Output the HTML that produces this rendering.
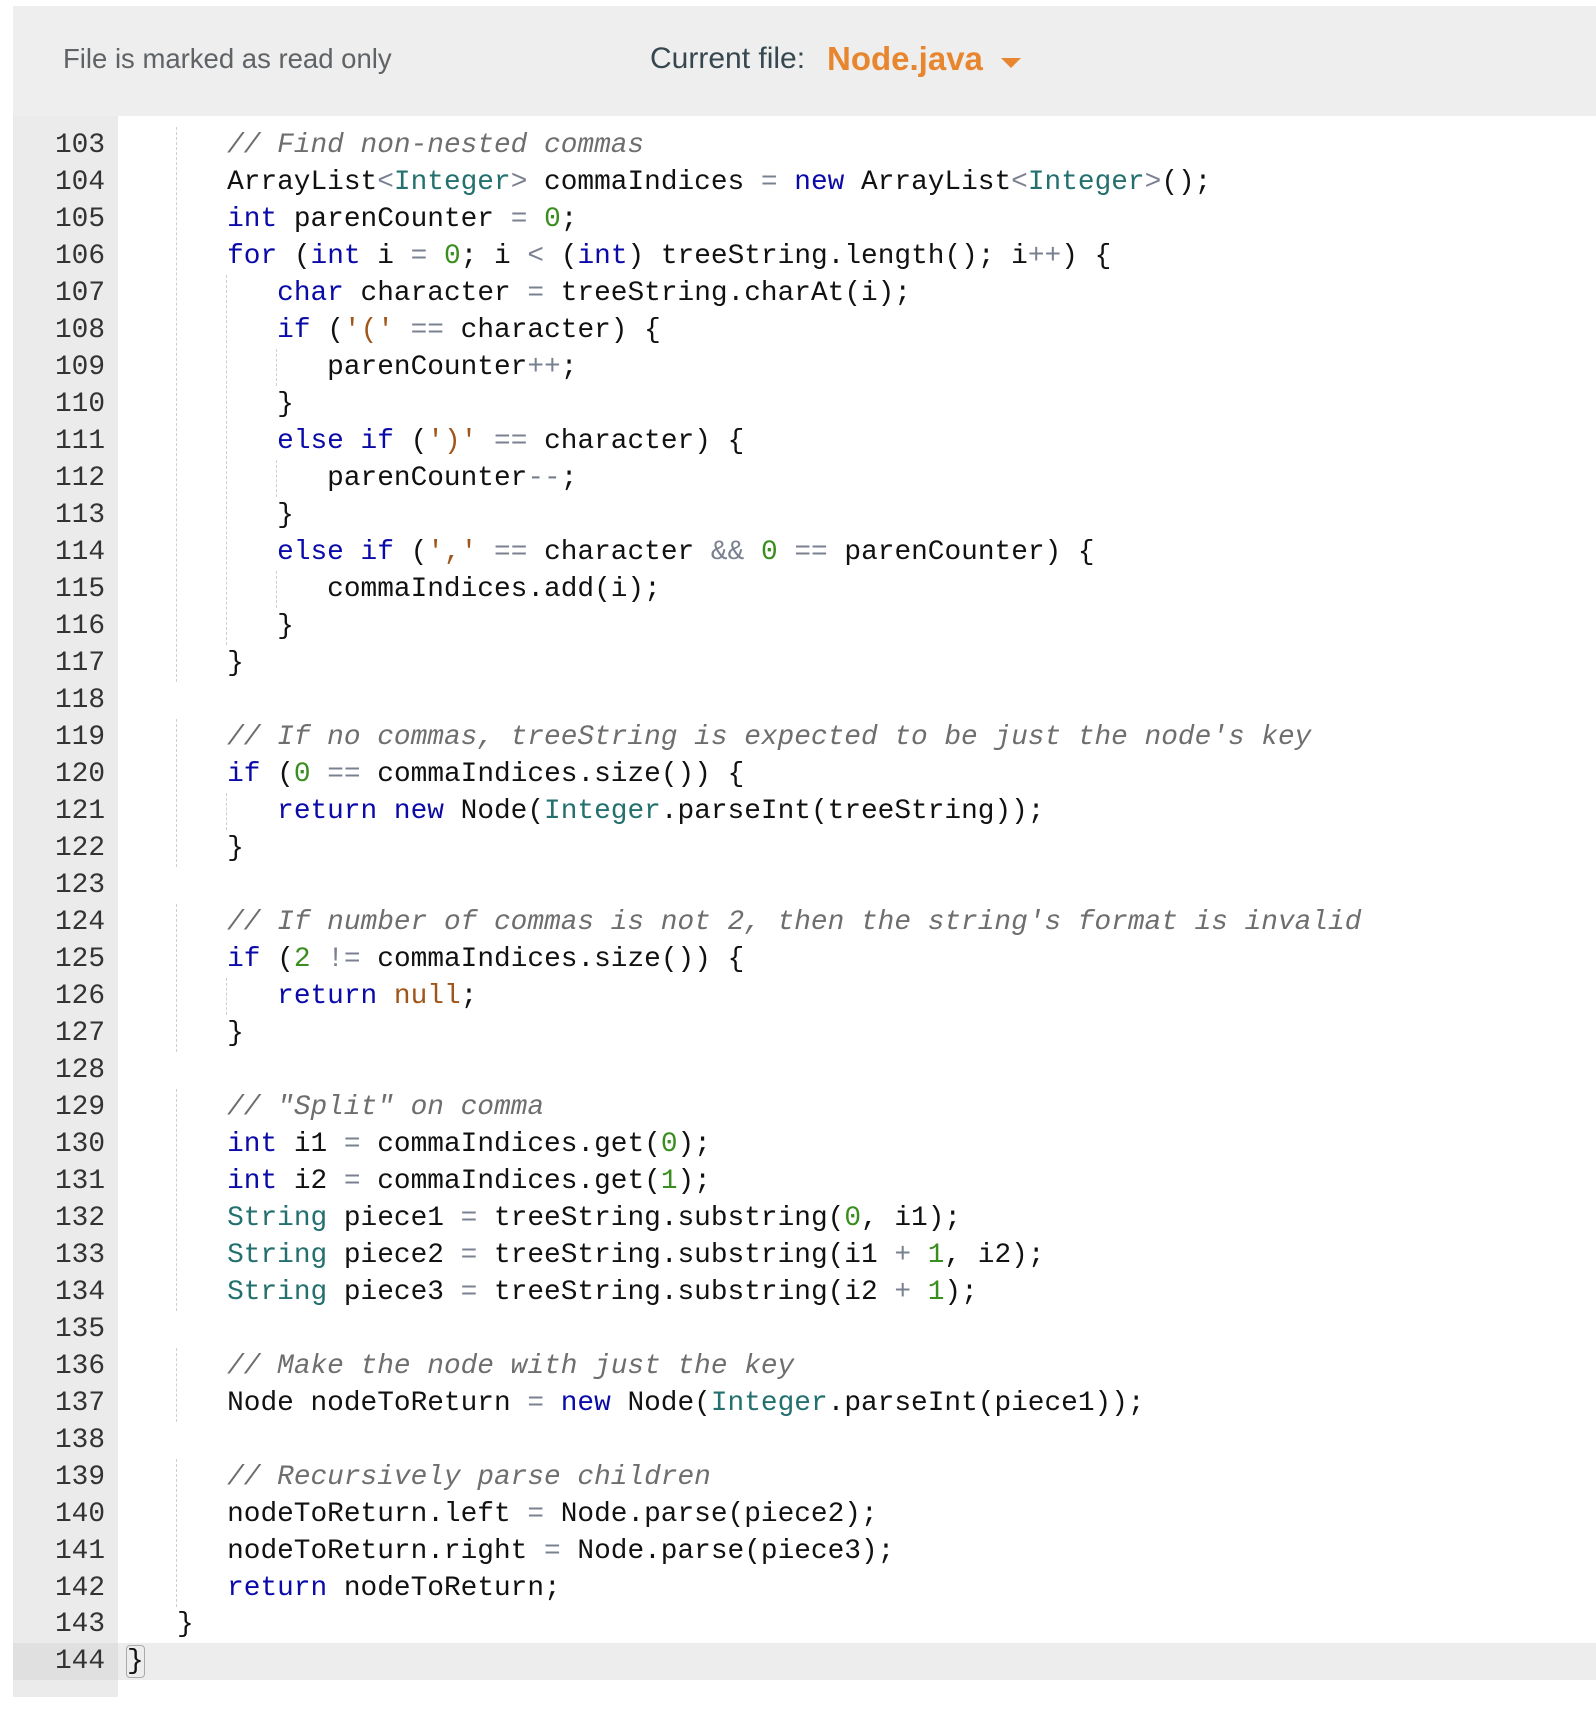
<!DOCTYPE html>
<html><head><meta charset="utf-8"><style>
html,body{margin:0;padding:0;background:#fff;width:1596px;height:1730px;overflow:hidden;position:relative}
#hdr{position:absolute;left:13px;top:6px;width:1583px;height:110px;background:#eeeeee;font-family:"Liberation Sans",sans-serif}
#ro{position:absolute;left:50px;top:37px;font-size:27.5px;color:#5f6366}
#cf{position:absolute;left:637px;top:36px;font-size:30px;color:#37474f}
#nj{position:absolute;left:814px;top:34px;font-size:33px;font-weight:bold;color:#e8862f}
#tri{position:absolute;left:988px;top:52px;width:0;height:0;border-left:10px solid transparent;border-right:10px solid transparent;border-top:10px solid #e8862f}
#gut{position:absolute;left:13px;top:116px;width:105px;height:1581px;background:#ebebeb}
#hl{position:absolute;left:118px;top:1643px;width:1478px;height:37px;background:#ededed}
#hlg{position:absolute;left:13px;top:1643px;width:105px;height:37px;background:#e0e0e0}
.ln{position:absolute;left:13px;width:92px;text-align:right;font-family:"Liberation Mono",monospace;font-size:27.8px;color:#333;line-height:37px;height:37px}
.cl{position:absolute;left:127px;font-family:"Liberation Mono",monospace;font-size:27.8px;color:#111;line-height:37px;height:37px;white-space:pre}
.k{color:#0a0aa8}.t{color:#23706f}.n{color:#3a8e1f}.s{color:#a0561a}.o{color:#7a8090}.c{color:#6e6e6e;font-style:italic}
.g{position:absolute;width:0;border-left:1px dashed #cfcfcf}
.br{outline:1.5px solid #aaa;border-radius:3px}
#wrap{position:absolute;left:0;top:3px;width:1596px;height:1640px}
</style></head><body>
<div id="hdr"><div id="ro">File is marked as read only</div><div id="cf">Current file:</div><div id="nj">Node.java</div><div id="tri"></div></div>
<div id="gut"></div><div id="hl"></div><div id="hlg"></div>
<div id="wrap">
<div class="g" style="left:176px;top:124px;height:555px"></div>
<div class="g" style="left:176px;top:716px;height:148px"></div>
<div class="g" style="left:176px;top:901px;height:148px"></div>
<div class="g" style="left:176px;top:1086px;height:222px"></div>
<div class="g" style="left:176px;top:1345px;height:74px"></div>
<div class="g" style="left:176px;top:1456px;height:148px"></div>
<div class="g" style="left:226px;top:272px;height:370px"></div>
<div class="g" style="left:226px;top:790px;height:37px"></div>
<div class="g" style="left:226px;top:975px;height:37px"></div>
<div class="g" style="left:276px;top:346px;height:37px"></div>
<div class="g" style="left:276px;top:457px;height:37px"></div>
<div class="g" style="left:276px;top:568px;height:37px"></div>
<div class="ln" style="top:124px">103</div><div class="cl" style="top:124px">      <span class="c">// Find non-nested commas</span></div>
<div class="ln" style="top:161px">104</div><div class="cl" style="top:161px">      ArrayList<span class="o">&lt;</span><span class="t">Integer</span><span class="o">&gt;</span> commaIndices <span class="o">=</span> <span class="k">new</span> ArrayList<span class="o">&lt;</span><span class="t">Integer</span><span class="o">&gt;</span>();</div>
<div class="ln" style="top:198px">105</div><div class="cl" style="top:198px">      <span class="k">int</span> parenCounter <span class="o">=</span> <span class="n">0</span>;</div>
<div class="ln" style="top:235px">106</div><div class="cl" style="top:235px">      <span class="k">for</span> (<span class="k">int</span> i <span class="o">=</span> <span class="n">0</span>; i <span class="o">&lt;</span> (<span class="k">int</span>) treeString.length(); i<span class="o">++</span>) {</div>
<div class="ln" style="top:272px">107</div><div class="cl" style="top:272px">         <span class="k">char</span> character <span class="o">=</span> treeString.charAt(i);</div>
<div class="ln" style="top:309px">108</div><div class="cl" style="top:309px">         <span class="k">if</span> (<span class="s">'('</span> <span class="o">==</span> character) {</div>
<div class="ln" style="top:346px">109</div><div class="cl" style="top:346px">            parenCounter<span class="o">++</span>;</div>
<div class="ln" style="top:383px">110</div><div class="cl" style="top:383px">         }</div>
<div class="ln" style="top:420px">111</div><div class="cl" style="top:420px">         <span class="k">else if</span> (<span class="s">')'</span> <span class="o">==</span> character) {</div>
<div class="ln" style="top:457px">112</div><div class="cl" style="top:457px">            parenCounter<span class="o">--</span>;</div>
<div class="ln" style="top:494px">113</div><div class="cl" style="top:494px">         }</div>
<div class="ln" style="top:531px">114</div><div class="cl" style="top:531px">         <span class="k">else if</span> (<span class="s">','</span> <span class="o">==</span> character <span class="o">&amp;&amp;</span> <span class="n">0</span> <span class="o">==</span> parenCounter) {</div>
<div class="ln" style="top:568px">115</div><div class="cl" style="top:568px">            commaIndices.add(i);</div>
<div class="ln" style="top:605px">116</div><div class="cl" style="top:605px">         }</div>
<div class="ln" style="top:642px">117</div><div class="cl" style="top:642px">      }</div>
<div class="ln" style="top:679px">118</div>
<div class="ln" style="top:716px">119</div><div class="cl" style="top:716px">      <span class="c">// If no commas, treeString is expected to be just the node's key</span></div>
<div class="ln" style="top:753px">120</div><div class="cl" style="top:753px">      <span class="k">if</span> (<span class="n">0</span> <span class="o">==</span> commaIndices.size()) {</div>
<div class="ln" style="top:790px">121</div><div class="cl" style="top:790px">         <span class="k">return new</span> Node(<span class="t">Integer</span>.parseInt(treeString));</div>
<div class="ln" style="top:827px">122</div><div class="cl" style="top:827px">      }</div>
<div class="ln" style="top:864px">123</div>
<div class="ln" style="top:901px">124</div><div class="cl" style="top:901px">      <span class="c">// If number of commas is not 2, then the string's format is invalid</span></div>
<div class="ln" style="top:938px">125</div><div class="cl" style="top:938px">      <span class="k">if</span> (<span class="n">2</span> <span class="o">!=</span> commaIndices.size()) {</div>
<div class="ln" style="top:975px">126</div><div class="cl" style="top:975px">         <span class="k">return</span> <span class="s">null</span>;</div>
<div class="ln" style="top:1012px">127</div><div class="cl" style="top:1012px">      }</div>
<div class="ln" style="top:1049px">128</div>
<div class="ln" style="top:1086px">129</div><div class="cl" style="top:1086px">      <span class="c">// "Split" on comma</span></div>
<div class="ln" style="top:1123px">130</div><div class="cl" style="top:1123px">      <span class="k">int</span> i1 <span class="o">=</span> commaIndices.get(<span class="n">0</span>);</div>
<div class="ln" style="top:1160px">131</div><div class="cl" style="top:1160px">      <span class="k">int</span> i2 <span class="o">=</span> commaIndices.get(<span class="n">1</span>);</div>
<div class="ln" style="top:1197px">132</div><div class="cl" style="top:1197px">      <span class="t">String</span> piece1 <span class="o">=</span> treeString.substring(<span class="n">0</span>, i1);</div>
<div class="ln" style="top:1234px">133</div><div class="cl" style="top:1234px">      <span class="t">String</span> piece2 <span class="o">=</span> treeString.substring(i1 <span class="o">+</span> <span class="n">1</span>, i2);</div>
<div class="ln" style="top:1271px">134</div><div class="cl" style="top:1271px">      <span class="t">String</span> piece3 <span class="o">=</span> treeString.substring(i2 <span class="o">+</span> <span class="n">1</span>);</div>
<div class="ln" style="top:1308px">135</div>
<div class="ln" style="top:1345px">136</div><div class="cl" style="top:1345px">      <span class="c">// Make the node with just the key</span></div>
<div class="ln" style="top:1382px">137</div><div class="cl" style="top:1382px">      Node nodeToReturn <span class="o">=</span> <span class="k">new</span> Node(<span class="t">Integer</span>.parseInt(piece1));</div>
<div class="ln" style="top:1419px">138</div>
<div class="ln" style="top:1456px">139</div><div class="cl" style="top:1456px">      <span class="c">// Recursively parse children</span></div>
<div class="ln" style="top:1493px">140</div><div class="cl" style="top:1493px">      nodeToReturn.left <span class="o">=</span> Node.parse(piece2);</div>
<div class="ln" style="top:1530px">141</div><div class="cl" style="top:1530px">      nodeToReturn.right <span class="o">=</span> Node.parse(piece3);</div>
<div class="ln" style="top:1567px">142</div><div class="cl" style="top:1567px">      <span class="k">return</span> nodeToReturn;</div>
<div class="ln" style="top:1603px">143</div><div class="cl" style="top:1603px">   }</div>
</div>
<div class="ln" style="top:1643px">144</div><div class="cl" style="top:1643px"><span class="br">}</span></div>
</body></html>
